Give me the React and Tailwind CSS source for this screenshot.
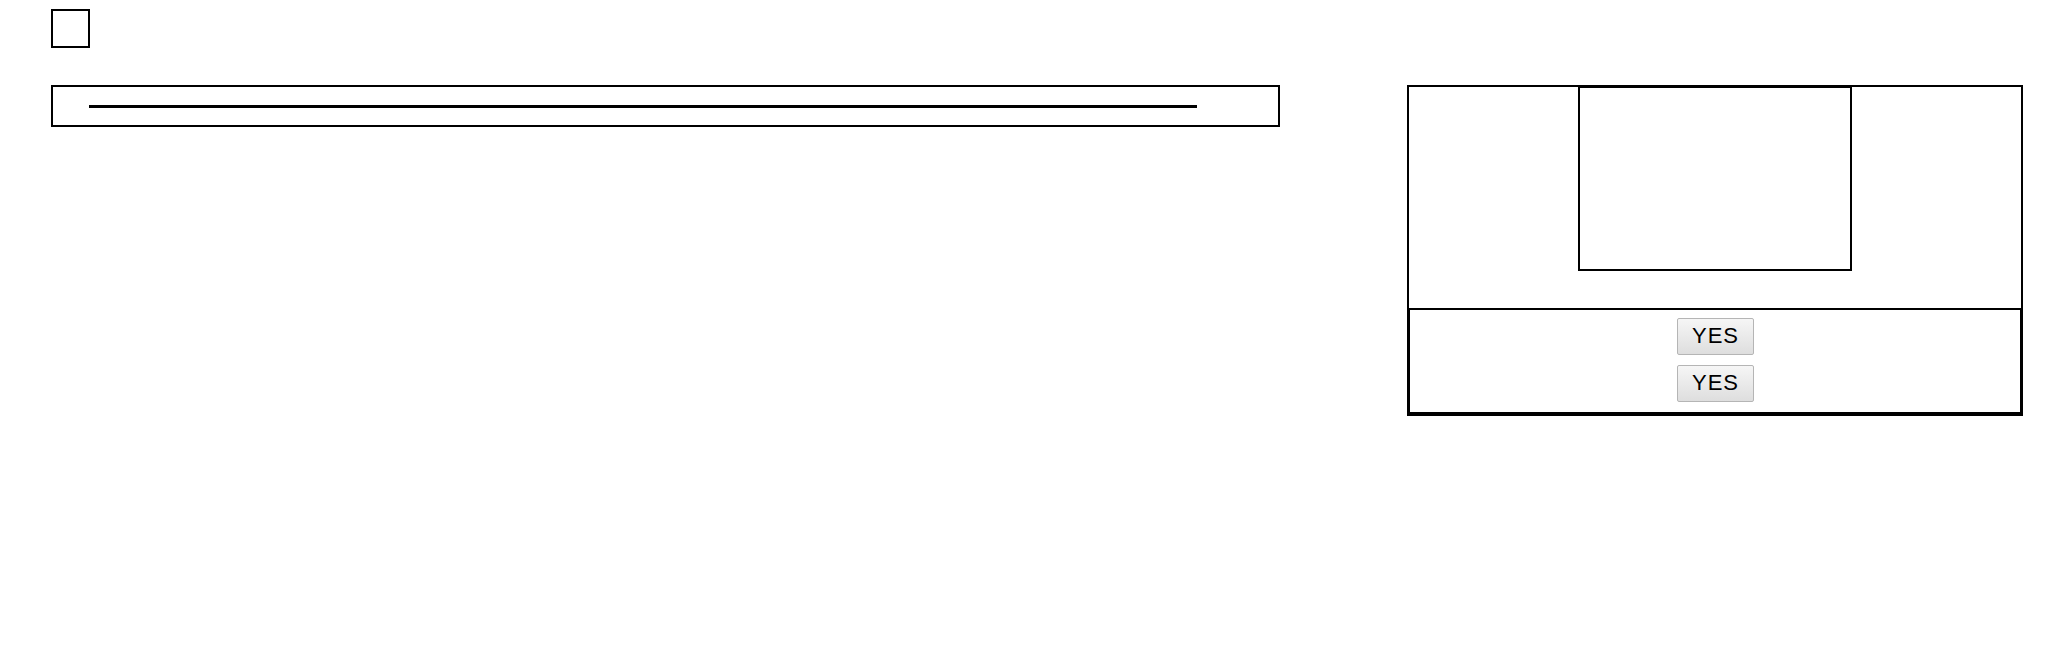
const YesButton = () => (
  <button className="h-[37px] w-[77px] rounded-[2px] border border-[#b5b5b5] bg-gradient-to-b from-[#f6f6f6] to-[#dedede] pb-[1px] pl-[1px] text-[22px] leading-none tracking-[1px] text-black">
    YES
  </button>
);

export default function App() {
  return (
    <div className="min-h-[654px] bg-white pl-[51px] pt-[9px] font-['Liberation_Sans',Arial,sans-serif]">
      <div className="h-[39px] w-[39px] border-2 border-black" />
      <div className="mt-[37px] flex items-start gap-[127px]">
        <div className="flex h-[42px] w-[1229px] items-center border-2 border-black pl-[36px]">
          <div className="h-[3px] w-[1108px] bg-black" />
        </div>
        <div className="flex h-[331px] w-[616px] flex-col border-2 border-black">
          <div className="flex flex-1 justify-center">
            <div className="-mt-px h-[185px] w-[274px] border-2 border-black" />
          </div>
          <div className="-mb-[2px] -mx-px flex h-[108px] flex-col items-center gap-[10px] border-2 border-b-4 border-black pt-[8px]">
            <YesButton />
            <YesButton />
          </div>
        </div>
      </div>
    </div>
  );
}
